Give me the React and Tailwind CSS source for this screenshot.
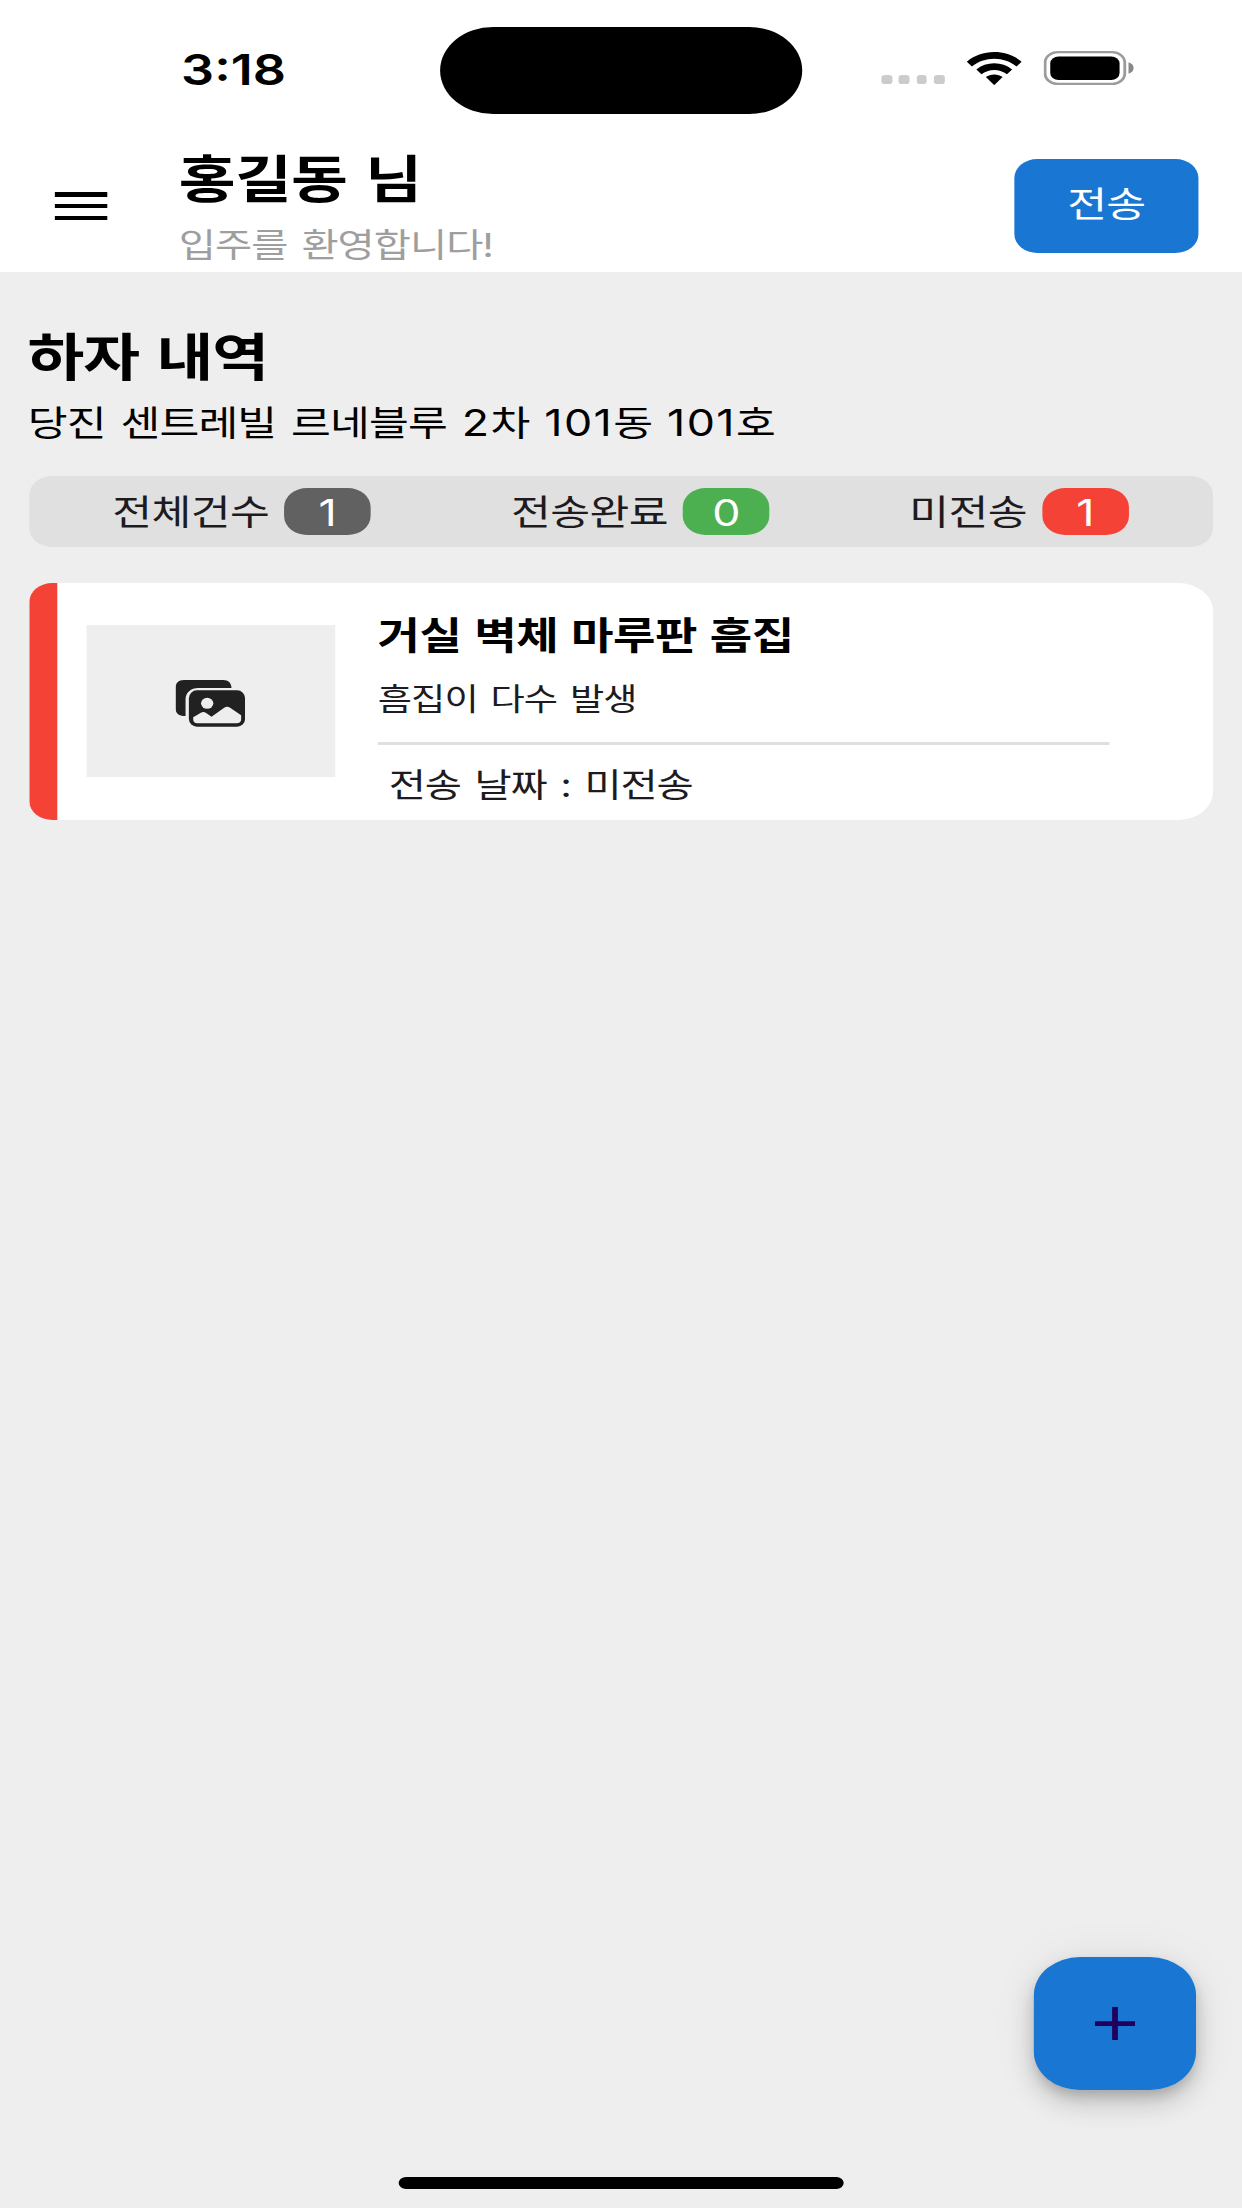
const stats = [
  { label: '전체건수', count: 1, color: 'bg-[#616161]', slot: 'ml-[28.900px]' },
  { label: '전송완료', count: 0, color: 'bg-[#4caf50]', slot: 'ml-[48.500px]' },
  { label: '미전송', count: 1, color: 'bg-[#f44336]', slot: 'ml-[48.300px]' },
];

function WifiIcon() {
  return (
    <svg className="mt-[0.300px] h-[14px] w-[19px]" viewBox="0 0 19 14" preserveAspectRatio="none" fill="#000">
      <path d="M9.500 0C5.900 0 2.500 1.500 0 4.100l1.800 2C3.900 4.100 6.600 2.900 9.500 2.900s5.600 1.200 7.700 3.200l1.800-2C16.500 1.500 13.100 0 9.500 0Z" />
      <path d="M9.500 4.800c-2.300 0-4.500.9-6.200 2.600L5.100 9.400c1.200-1.100 2.700-1.800 4.400-1.800s3.200.7 4.400 1.800l1.800-2c-1.700-1.700-3.900-2.600-6.200-2.600Z" />
      <path d="M9.500 9.500c-1.100 0-2.100.4-2.900 1.100L9.500 14l2.900-3.400c-.8-.7-1.800-1.100-2.900-1.100Z" />
    </svg>
  );
}

function Battery() {
  return (
    <div className="flex items-center pt-[0.200px]">
      <svg className="h-[14.400px] w-[31.200px]" viewBox="0 0 31.200 14.400">
        <rect x="0.500" y="0.500" width="27.600" height="13.400" rx="4.400" fill="none" stroke="#9c9c9c" strokeWidth="1" />
        <rect x="2.300" y="2.300" width="24" height="9.900" rx="2.900" fill="#000" />
        <path d="M29.400 4.800C30.500 5.200 31.200 6.100 31.200 7.200S30.500 9.200 29.400 9.600Z" fill="#888888" />
      </svg>
    </div>
  );
}

function StatusBar() {
  return (
    <div className="flex h-[59px] bg-white">
      <div className="w-[152.400px] pt-[19.500px] pl-[62.700px] text-[18px] leading-[20px] font-semibold">3:18</div>
      <div className="mt-[11.300px] h-[36.700px] w-[125.200px] rounded-full bg-black" />
      <div className="mt-[21.500px] ml-[27.700px] flex h-[14.400px]">
        <div className="flex w-[29.300px] items-end gap-[2.300px] pb-[0.300px]">
          {[0, 1, 2, 3].map((i) => (
            <div key={i} className="h-[3.800px] w-[3.700px] rounded-[1.200px] bg-[#cccccc]" />
          ))}
        </div>
        <WifiIcon />
        <div className="ml-[7.600px]">
          <Battery />
        </div>
      </div>
    </div>
  );
}

function Header() {
  return (
    <header className="flex h-[56px] bg-white">
      <button className="flex h-[56px] w-[61.900px] flex-col gap-[3px] pt-[22px] pl-[19px]" aria-label="menu">
        <span className="h-[2px] w-[18px] bg-black" />
        <span className="h-[2px] w-[18px] bg-black" />
        <span className="h-[2px] w-[18px] bg-black" />
      </button>
      <div className="w-[289.100px] whitespace-nowrap">
        <h1 className="pt-[1.700px] text-[21.400px] leading-[30px] font-bold tracking-[-0.250px] [word-spacing:1.400px]">홍길동 님</h1>
        <p className="pt-[3.200px] text-[14px] leading-[20px] tracking-[-0.350px] [word-spacing:1.300px] text-[#9e9e9e]">입주를 환영합니다!</p>
      </div>
      <button className="mt-[8px] flex h-[40px] w-[64px] justify-center rounded-[8px] bg-[#1976d2] pt-[9.500px] text-[15px] leading-[20px] tracking-[-0.300px] text-white">
        전송
      </button>
    </header>
  );
}

function Stats() {
  return (
    <div className="mt-[10px] flex h-[30px] items-center rounded-[8px] bg-[#e0e0e0] text-[#1d1b20]">
      {stats.map((s) => (
        <div key={s.label} className={s.slot + ' flex items-center whitespace-nowrap'}>
          <span className="pt-[0.900px] text-[15px] leading-[20px] tracking-[-0.200px]">{s.label}</span>
          <span className={s.color + ' ml-[5.200px] h-[20px] w-[30px] rounded-[8px] text-center text-[15.500px] leading-[21.400px] text-white'}>
            {s.count}
          </span>
        </div>
      ))}
    </div>
  );
}

function PhotosIcon() {
  return (
    <svg className="mt-[1.800px] mr-[0.400px] h-[19.700px] w-[24.200px]" viewBox="0 0 210 140" preserveAspectRatio="none">
      <path fill="#212121" d="M25 0H144C158 0 168 9 168 24H68C46 24 30 38 30 58V108H24C9 108 0 99 0 85V24C0 9 9 0 25 0Z" />
      <rect x="40" y="31" width="169" height="109" rx="24" fill="#212121" />
      <ellipse cx="95" cy="70" rx="18.500" ry="16.500" fill="#eeeeee" />
      <path fill="#eeeeee" d="M53 118V112L76 98Q84 93 92 99L108 110 145 84Q155 77 165 84L197 106V118Q197 130 183 130H66Q53 130 53 118Z" />
    </svg>
  );
}

function DefectCard() {
  return (
    <article className="mt-[15px] flex h-[100px] overflow-hidden rounded-l-[8px] rounded-r-[12px] bg-white">
      <div className="w-[10px] bg-[#f44336]" />
      <div className="mt-[17.800px] ml-[10px] flex h-[64.400px] w-[86px] items-center justify-center bg-[#eeeeee]">
        <PhotosIcon />
      </div>
      <div className="ml-[15px] w-[253px] whitespace-nowrap text-[#1d1b20]">
        <h3 className="-ml-[0.300px] pt-[11px] text-[16px] leading-[22px] font-bold tracking-[-0.200px] [word-spacing:0.900px] text-black">거실 벽체 마루판 흠집</h3>
        <p className="-ml-[0.200px] pt-[6.100px] text-[12.900px] leading-[20px] tracking-[-0.320px] [word-spacing:1.100px]">흠집이 다수 발생</p>
        <div className="mt-[8px] h-[1.600px] bg-[#e0e0e0]" />
        <p className="pt-[7.200px] pl-[3.600px] text-[14px] leading-[20px] tracking-[-0.400px] [word-spacing:1.200px]">전송 날짜 : 미전송</p>
      </div>
    </article>
  );
}

function Digits({ children }) {
  return <span className="text-[15.500px] leading-none tracking-[0.500px]">{children}</span>;
}

export default function App() {
  return (
    <div className="h-[2208px] w-[1242px] overflow-hidden">
      <div className="w-[1018.730px] origin-top-left scale-x-[1.219170]">
        <div className="relative flex h-[932px] w-[430px] flex-col bg-[#eeeeee] font-['Inter','Noto_Sans_CJK_KR',sans-serif] text-black [zoom:2.369099]">
          <StatusBar />
          <Header />
          <main className="flex-1 px-[10px] whitespace-nowrap">
            <h2 className="-ml-[0.500px] pt-[20.200px] text-[21.400px] leading-[32px] font-bold tracking-[-0.350px] [word-spacing:1.300px]">하자 내역</h2>
            <p className="-ml-[0.400px] pt-[0.900px] pb-[0.900px] text-[15px] leading-[22px] tracking-[-0.300px] [word-spacing:1.200px]">
              당진 센트레빌 르네블루 <Digits>2</Digits>차 <Digits>101</Digits>동 <Digits>101</Digits>호
            </p>
            <Stats />
            <DefectCard />
          </main>
          <div className="flex justify-center pb-[8px]">
            <div className="h-[5px] w-[154px] rounded-full bg-black" />
          </div>
          <button
            aria-label="add"
            className="absolute top-[826px] left-[358px] flex size-[56px] items-center justify-center rounded-[16px] bg-[#1976d2] shadow-[0_3px_5px_-1px_rgba(0,0,0,0.18),0_6px_10px_rgba(0,0,0,0.14),0_1px_18px_rgba(0,0,0,0.07)]"
          >
            <svg className="mt-[0.300px] ml-[0.300px] size-[14px]" viewBox="0 0 14 14" fill="#21005d">
              <path d="M6 0h2v6h6v2H8v6H6V8H0V6h6Z" />
            </svg>
          </button>
        </div>
      </div>
    </div>
  );
}
